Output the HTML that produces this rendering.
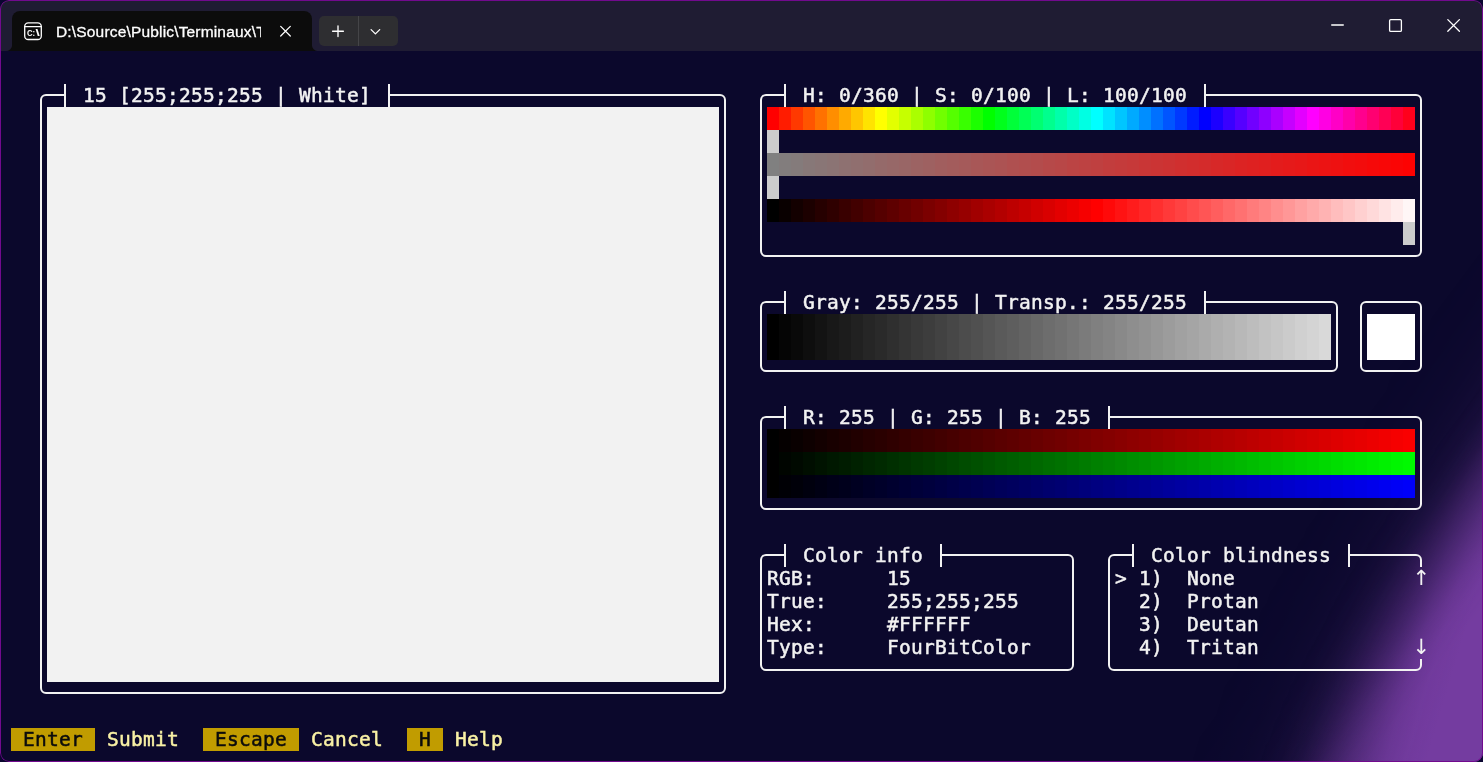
<!DOCTYPE html>
<html lang="en">
<head>
<meta charset="utf-8">
<title>D:\Source\Public\Terminaux</title>
<style>
html,body{margin:0;padding:0;background:#0a0530;}
body{width:1483px;height:762px;overflow:hidden;position:relative;font-family:"Liberation Sans",sans-serif;}
#win{position:absolute;left:0;top:0;width:1483px;height:762px;border-radius:9px;overflow:hidden;background:#0b082c;}
#frame{position:absolute;left:0;top:0;width:1481px;height:760px;border:1px solid #720a8e;border-radius:9px;}
#glow{position:absolute;left:0;top:0;width:1483px;height:762px;
 background:linear-gradient(106.7deg,rgba(116,60,160,0) 1423px,rgba(116,60,160,0.04) 1445px,rgba(116,60,160,0.14) 1464px,rgba(116,60,160,0.31) 1483px,rgba(116,60,160,0.5) 1504px,rgba(116,60,160,0.69) 1526px,rgba(116,60,160,0.86) 1545px,rgba(116,60,160,0.96) 1564px,rgba(116,60,160,1) 1585px);
 -webkit-mask-image:linear-gradient(126.9deg,rgba(0,0,0,0) 1416px,rgba(0,0,0,0.04) 1434px,rgba(0,0,0,0.14) 1450px,rgba(0,0,0,0.31) 1465px,rgba(0,0,0,0.5) 1483px,rgba(0,0,0,0.69) 1501px,rgba(0,0,0,0.86) 1517px,rgba(0,0,0,0.96) 1533px,rgba(0,0,0,1) 1551px);mask-image:linear-gradient(126.9deg,rgba(0,0,0,0) 1416px,rgba(0,0,0,0.04) 1434px,rgba(0,0,0,0.14) 1450px,rgba(0,0,0,0.31) 1465px,rgba(0,0,0,0.5) 1483px,rgba(0,0,0,0.69) 1501px,rgba(0,0,0,0.86) 1517px,rgba(0,0,0,0.96) 1533px,rgba(0,0,0,1) 1551px);}
#glow2{position:absolute;left:0;top:0;width:1483px;height:762px;
 background:linear-gradient(106.7deg,rgba(116,60,160,0) 1337px,rgba(116,60,160,0.016) 1375px,rgba(116,60,160,0.056) 1408px,rgba(116,60,160,0.124) 1441px,rgba(116,60,160,0.2) 1479px,rgba(116,60,160,0.276) 1517px,rgba(116,60,160,0.344) 1551px,rgba(116,60,160,0.384) 1584px,rgba(116,60,160,0.4) 1622px);
 -webkit-mask-image:linear-gradient(126.9deg,rgba(0,0,0,0) 1326px,rgba(0,0,0,0.04) 1364px,rgba(0,0,0,0.14) 1397px,rgba(0,0,0,0.31) 1430px,rgba(0,0,0,0.5) 1468px,rgba(0,0,0,0.69) 1506px,rgba(0,0,0,0.86) 1540px,rgba(0,0,0,0.96) 1573px,rgba(0,0,0,1) 1611px);mask-image:linear-gradient(126.9deg,rgba(0,0,0,0) 1326px,rgba(0,0,0,0.04) 1364px,rgba(0,0,0,0.14) 1397px,rgba(0,0,0,0.31) 1430px,rgba(0,0,0,0.5) 1468px,rgba(0,0,0,0.69) 1506px,rgba(0,0,0,0.86) 1540px,rgba(0,0,0,0.96) 1573px,rgba(0,0,0,1) 1611px);}
#titlebar{position:absolute;left:0;top:0;width:1483px;height:51px;background:#1f1c33;}
#tab{position:absolute;left:12px;top:11px;width:300px;height:40px;background:#0c0c0c;border-radius:8px 8px 0 0;}
#tab:before,#tab:after{content:"";position:absolute;bottom:0;width:6px;height:6px;}
#tab:before{left:-6px;background:radial-gradient(circle at 0 0,rgba(12,12,12,0) 5.5px,#0c0c0c 6.5px);}
#tab:after{right:-6px;background:radial-gradient(circle at 100% 0,rgba(12,12,12,0) 5.5px,#0c0c0c 6.5px);}
#tabtitle{position:absolute;left:56px;top:22px;width:205px;height:22px;overflow:hidden;white-space:nowrap;color:#fff;font-size:15.5px;line-height:20px;letter-spacing:0.17px;-webkit-text-stroke:0.3px #fff;will-change:transform;}
#newtab{position:absolute;left:319px;top:16px;width:79px;height:30px;background:#2e2e31;border-radius:5px;}
#newtab i{position:absolute;left:39px;top:0;width:1px;height:30px;background:#454548;}
.ico{position:absolute;left:0;top:0;width:1483px;height:762px;pointer-events:none;}
#term{will-change:transform;position:absolute;left:0;top:0;width:1483px;height:762px;font-family:"DejaVu Sans Mono","Liberation Mono",monospace;font-size:19.5px;line-height:23px;color:#f2f2f2;}
#term div{position:absolute;white-space:pre;}
.t,.key{height:23px;letter-spacing:0.26px;}
.t,.key{-webkit-text-stroke:0.5px currentColor;}
.ar{font-family:"DejaVu Sans","Liberation Sans",sans-serif;font-size:21px;line-height:23px;height:23px;}
.y{color:#f9f1a5;}
.key{background:#c19c00;color:#0c0c0c;text-align:center;}
</style>
</head>
<body>
<div id="win">
<div id="glow2"></div>
<div id="glow"></div>
<div id="titlebar"></div>
<div id="tab"></div>
<div id="tabtitle">D:\Source\Public\Terminaux\T</div>
<div id="newtab"><i></i></div>
<svg class="ico" viewBox="-1 -1 1483 762" fill="none" stroke="#fff" stroke-width="1.3" stroke-linecap="round" stroke-linejoin="round">
 <!-- terminal icon -->
 <rect x="23.7" y="21.8" width="16.6" height="16.7" rx="3.6"/>
 <path d="M23.7 25.7H40.3" stroke-width="1.2"/>
 <!-- tab close -->
 <path d="M279.7 25.4L289.3 35M289.3 25.4L279.7 35" stroke-width="1.25"/>
 <!-- plus -->
 <path d="M331.6 30.2H342.4M337 24.8V35.6" stroke-width="1.35"/>
 <!-- chevron -->
 <path d="M370.1 28.6L374.4 32.9L378.7 28.6" stroke-width="1.3"/>
 <!-- window controls -->
 <path d="M1330.7 24H1342.3" stroke-width="1.3"/>
 <rect x="1388.6" y="18.6" width="11.8" height="11.8" rx="1.2" stroke-width="1.3"/>
 <path d="M1446.8 18.6L1458.4 30.2M1458.4 18.6L1446.8 30.2" stroke-width="1.3"/>
</svg>
<svg class="ico" viewBox="0 0 1483 762"><text y="35.9" font-family="Liberation Sans,sans-serif" font-weight="bold" font-size="9.6" fill="#fff"><tspan x="27" textLength="8.2" lengthAdjust="spacingAndGlyphs">C:</tspan><tspan x="35.6" textLength="4.3" lengthAdjust="spacingAndGlyphs">\</tspan></text></svg>
<div id="term">
<div class="t" style="left:83px;top:84px;">15 [255;255;255 | White]</div>
<div class="bar" style="left:47px;top:107px;width:672px;height:575px;background:#f2f2f2"></div>
<div class="t" style="left:803px;top:84px;">H: 0/360 | S: 0/100 | L: 100/100</div>
<div class="bar" style="left:767px;top:107px;width:648px;height:23px;background:linear-gradient(90deg,#ff0000 0px 12px,#ff1c00 12px 24px,#ff3900 24px 36px,#ff5500 36px 48px,#ff7100 48px 60px,#ff8e00 60px 72px,#ffaa00 72px 84px,#ffc600 84px 96px,#ffe300 96px 108px,#ffff00 108px 120px,#e3ff00 120px 132px,#c6ff00 132px 144px,#aaff00 144px 156px,#8eff00 156px 168px,#71ff00 168px 180px,#55ff00 180px 192px,#39ff00 192px 204px,#1cff00 204px 216px,#00ff00 216px 228px,#00ff1c 228px 240px,#00ff39 240px 252px,#00ff55 252px 264px,#00ff71 264px 276px,#00ff8e 276px 288px,#00ffaa 288px 300px,#00ffc6 300px 312px,#00ffe3 312px 324px,#00ffff 324px 336px,#00e3ff 336px 348px,#00c6ff 348px 360px,#00aaff 360px 372px,#008eff 372px 384px,#0071ff 384px 396px,#0055ff 396px 408px,#0039ff 408px 420px,#001cff 420px 432px,#0000ff 432px 444px,#1c00ff 444px 456px,#3900ff 456px 468px,#5500ff 468px 480px,#7100ff 480px 492px,#8e00ff 492px 504px,#aa00ff 504px 516px,#c600ff 516px 528px,#e300ff 528px 540px,#ff00ff 540px 552px,#ff00e3 552px 564px,#ff00c6 564px 576px,#ff00aa 576px 588px,#ff008e 588px 600px,#ff0071 600px 612px,#ff0055 612px 624px,#ff0039 624px 636px,#ff001c 636px 648px)"></div>
<div class="bar" style="left:767px;top:153px;width:648px;height:23px;background:linear-gradient(90deg,#808080 0px 12px,#827d7d 12px 24px,#847b7b 24px 36px,#877878 36px 48px,#897676 48px 60px,#8b7474 60px 72px,#8e7171 72px 84px,#906f6f 84px 96px,#926d6d 96px 108px,#956a6a 108px 120px,#976868 120px 132px,#996666 132px 144px,#9c6363 144px 156px,#9e6161 156px 168px,#a15e5e 168px 180px,#a35c5c 180px 192px,#a55a5a 192px 204px,#a85757 204px 216px,#aa5555 216px 228px,#ac5353 228px 240px,#af5050 240px 252px,#b14e4e 252px 264px,#b34c4c 264px 276px,#b64949 276px 288px,#b84747 288px 300px,#bb4444 300px 312px,#bd4242 312px 324px,#bf4040 324px 336px,#c23d3d 336px 348px,#c43b3b 348px 360px,#c63939 360px 372px,#c93636 372px 384px,#cb3434 384px 396px,#cd3232 396px 408px,#d02f2f 408px 420px,#d22d2d 420px 432px,#d42b2b 432px 444px,#d72828 444px 456px,#d92626 456px 468px,#dc2323 468px 480px,#de2121 480px 492px,#e01f1f 492px 504px,#e31c1c 504px 516px,#e51a1a 516px 528px,#e71818 528px 540px,#ea1515 540px 552px,#ec1313 552px 564px,#ee1111 564px 576px,#f10e0e 576px 588px,#f30c0c 588px 600px,#f60909 600px 612px,#f80707 612px 624px,#fa0505 624px 636px,#fd0202 636px 648px)"></div>
<div class="bar" style="left:767px;top:199px;width:648px;height:23px;background:linear-gradient(90deg,#000000 0px 12px,#090000 12px 24px,#130000 24px 36px,#1c0000 36px 48px,#260000 48px 60px,#2f0000 60px 72px,#390000 72px 84px,#420000 84px 96px,#4c0000 96px 108px,#550000 108px 120px,#5e0000 120px 132px,#680000 132px 144px,#710000 144px 156px,#7b0000 156px 168px,#840000 168px 180px,#8e0000 180px 192px,#970000 192px 204px,#a10000 204px 216px,#aa0000 216px 228px,#b30000 228px 240px,#bd0000 240px 252px,#c60000 252px 264px,#d00000 264px 276px,#d90000 276px 288px,#e30000 288px 300px,#ec0000 300px 312px,#f60000 312px 324px,#ff0000 324px 336px,#ff0909 336px 348px,#ff1313 348px 360px,#ff1c1c 360px 372px,#ff2626 372px 384px,#ff2f2f 384px 396px,#ff3939 396px 408px,#ff4242 408px 420px,#ff4c4c 420px 432px,#ff5555 432px 444px,#ff5e5e 444px 456px,#ff6868 456px 468px,#ff7171 468px 480px,#ff7b7b 480px 492px,#ff8484 492px 504px,#ff8e8e 504px 516px,#ff9797 516px 528px,#ffa1a1 528px 540px,#ffaaaa 540px 552px,#ffb3b3 552px 564px,#ffbdbd 564px 576px,#ffc6c6 576px 588px,#ffd0d0 588px 600px,#ffd9d9 600px 612px,#ffe3e3 612px 624px,#ffecec 624px 636px,#fff6f6 636px 648px)"></div>
<div class="bar" style="left:767px;top:130px;width:12px;height:23px;background:#cccccc"></div>
<div class="bar" style="left:767px;top:176px;width:12px;height:23px;background:#cccccc"></div>
<div class="bar" style="left:1403px;top:222px;width:12px;height:23px;background:#cccccc"></div>
<div class="t" style="left:803px;top:291px;">Gray: 255/255 | Transp.: 255/255</div>
<div class="bar" style="left:767px;top:314px;width:564px;height:46px;background:linear-gradient(90deg,#000000 0px 12px,#050505 12px 24px,#090909 24px 36px,#0e0e0e 36px 48px,#131313 48px 60px,#181818 60px 72px,#1c1c1c 72px 84px,#212121 84px 96px,#262626 96px 108px,#2a2a2a 108px 120px,#2f2f2f 120px 132px,#343434 132px 144px,#393939 144px 156px,#3d3d3d 156px 168px,#424242 168px 180px,#474747 180px 192px,#4c4c4c 192px 204px,#505050 204px 216px,#555555 216px 228px,#5a5a5a 228px 240px,#5e5e5e 240px 252px,#636363 252px 264px,#686868 264px 276px,#6d6d6d 276px 288px,#717171 288px 300px,#767676 300px 312px,#7b7b7b 312px 324px,#808080 324px 336px,#848484 336px 348px,#898989 348px 360px,#8e8e8e 360px 372px,#929292 372px 384px,#979797 384px 396px,#9c9c9c 396px 408px,#a1a1a1 408px 420px,#a5a5a5 420px 432px,#aaaaaa 432px 444px,#afafaf 444px 456px,#b3b3b3 456px 468px,#b8b8b8 468px 480px,#bdbdbd 480px 492px,#c2c2c2 492px 504px,#c6c6c6 504px 516px,#cbcbcb 516px 528px,#d0d0d0 528px 540px,#d4d4d4 540px 552px,#d9d9d9 552px 564px)"></div>
<div class="bar" style="left:1367px;top:314px;width:48px;height:46px;background:#ffffff"></div>
<div class="t" style="left:803px;top:406px;">R: 255 | G: 255 | B: 255</div>
<div class="bar" style="left:767px;top:429px;width:648px;height:23px;background:linear-gradient(90deg,#000000 0px 12px,#050000 12px 24px,#090000 24px 36px,#0e0000 36px 48px,#130000 48px 60px,#180000 60px 72px,#1c0000 72px 84px,#210000 84px 96px,#260000 96px 108px,#2a0000 108px 120px,#2f0000 120px 132px,#340000 132px 144px,#390000 144px 156px,#3d0000 156px 168px,#420000 168px 180px,#470000 180px 192px,#4c0000 192px 204px,#500000 204px 216px,#550000 216px 228px,#5a0000 228px 240px,#5e0000 240px 252px,#630000 252px 264px,#680000 264px 276px,#6d0000 276px 288px,#710000 288px 300px,#760000 300px 312px,#7b0000 312px 324px,#800000 324px 336px,#840000 336px 348px,#890000 348px 360px,#8e0000 360px 372px,#920000 372px 384px,#970000 384px 396px,#9c0000 396px 408px,#a10000 408px 420px,#a50000 420px 432px,#aa0000 432px 444px,#af0000 444px 456px,#b30000 456px 468px,#b80000 468px 480px,#bd0000 480px 492px,#c20000 492px 504px,#c60000 504px 516px,#cb0000 516px 528px,#d00000 528px 540px,#d40000 540px 552px,#d90000 552px 564px,#de0000 564px 576px,#e30000 576px 588px,#e70000 588px 600px,#ec0000 600px 612px,#f10000 612px 624px,#f60000 624px 636px,#fa0000 636px 648px)"></div>
<div class="bar" style="left:767px;top:452px;width:648px;height:23px;background:linear-gradient(90deg,#000000 0px 12px,#000500 12px 24px,#000900 24px 36px,#000e00 36px 48px,#001300 48px 60px,#001800 60px 72px,#001c00 72px 84px,#002100 84px 96px,#002600 96px 108px,#002a00 108px 120px,#002f00 120px 132px,#003400 132px 144px,#003900 144px 156px,#003d00 156px 168px,#004200 168px 180px,#004700 180px 192px,#004c00 192px 204px,#005000 204px 216px,#005500 216px 228px,#005a00 228px 240px,#005e00 240px 252px,#006300 252px 264px,#006800 264px 276px,#006d00 276px 288px,#007100 288px 300px,#007600 300px 312px,#007b00 312px 324px,#008000 324px 336px,#008400 336px 348px,#008900 348px 360px,#008e00 360px 372px,#009200 372px 384px,#009700 384px 396px,#009c00 396px 408px,#00a100 408px 420px,#00a500 420px 432px,#00aa00 432px 444px,#00af00 444px 456px,#00b300 456px 468px,#00b800 468px 480px,#00bd00 480px 492px,#00c200 492px 504px,#00c600 504px 516px,#00cb00 516px 528px,#00d000 528px 540px,#00d400 540px 552px,#00d900 552px 564px,#00de00 564px 576px,#00e300 576px 588px,#00e700 588px 600px,#00ec00 600px 612px,#00f100 612px 624px,#00f600 624px 636px,#00fa00 636px 648px)"></div>
<div class="bar" style="left:767px;top:475px;width:648px;height:23px;background:linear-gradient(90deg,#000000 0px 12px,#000005 12px 24px,#000009 24px 36px,#00000e 36px 48px,#000013 48px 60px,#000018 60px 72px,#00001c 72px 84px,#000021 84px 96px,#000026 96px 108px,#00002a 108px 120px,#00002f 120px 132px,#000034 132px 144px,#000039 144px 156px,#00003d 156px 168px,#000042 168px 180px,#000047 180px 192px,#00004c 192px 204px,#000050 204px 216px,#000055 216px 228px,#00005a 228px 240px,#00005e 240px 252px,#000063 252px 264px,#000068 264px 276px,#00006d 276px 288px,#000071 288px 300px,#000076 300px 312px,#00007b 312px 324px,#000080 324px 336px,#000084 336px 348px,#000089 348px 360px,#00008e 360px 372px,#000092 372px 384px,#000097 384px 396px,#00009c 396px 408px,#0000a1 408px 420px,#0000a5 420px 432px,#0000aa 432px 444px,#0000af 444px 456px,#0000b3 456px 468px,#0000b8 468px 480px,#0000bd 480px 492px,#0000c2 492px 504px,#0000c6 504px 516px,#0000cb 516px 528px,#0000d0 528px 540px,#0000d4 540px 552px,#0000d9 552px 564px,#0000de 564px 576px,#0000e3 576px 588px,#0000e7 588px 600px,#0000ec 600px 612px,#0000f1 612px 624px,#0000f6 624px 636px,#0000fa 636px 648px)"></div>
<div class="t" style="left:803px;top:544px;">Color info</div>
<div class="t" style="left:767px;top:567px;">RGB:</div>
<div class="t" style="left:887px;top:567px;">15</div>
<div class="t" style="left:767px;top:590px;">True:</div>
<div class="t" style="left:887px;top:590px;">255;255;255</div>
<div class="t" style="left:767px;top:613px;">Hex:</div>
<div class="t" style="left:887px;top:613px;">#FFFFFF</div>
<div class="t" style="left:767px;top:636px;">Type:</div>
<div class="t" style="left:887px;top:636px;">FourBitColor</div>
<div class="t" style="left:1151px;top:544px;">Color blindness</div>
<div class="t" style="left:1115px;top:567px;">&gt;</div>
<div class="t" style="left:1139px;top:567px;">1)</div>
<div class="t" style="left:1187px;top:567px;">None</div>
<div class="t" style="left:1139px;top:590px;">2)</div>
<div class="t" style="left:1187px;top:590px;">Protan</div>
<div class="t" style="left:1139px;top:613px;">3)</div>
<div class="t" style="left:1187px;top:613px;">Deutan</div>
<div class="t" style="left:1139px;top:636px;">4)</div>
<div class="t" style="left:1187px;top:636px;">Tritan</div>
<div class="key" style="left:11px;top:728px;width:84px">Enter</div>
<div class="t y" style="left:107px;top:728px;">Submit</div>
<div class="key" style="left:203px;top:728px;width:96px">Escape</div>
<div class="t y" style="left:311px;top:728px;">Cancel</div>
<div class="key" style="left:407px;top:728px;width:36px">H</div>
<div class="t y" style="left:455px;top:728px;">Help</div>
<div class="ar" style="left:1412.5px;top:567px">↑</div>
<div class="ar" style="left:1412.5px;top:636px">↓</div>
</div>
<svg class="ico" viewBox="0 0 1483 762" fill="none" stroke="#f2f2f2" stroke-width="2">
<path d="M389,95 H720 A5,5 0 0 1 725,100 V688 A5,5 0 0 1 720,693 H46 A5,5 0 0 1 41,688 V100 A5,5 0 0 1 46,95 H65 M65,84 V107 M389,84 V107"/>
<path d="M1205,95 H1416 A5,5 0 0 1 1421,100 V251 A5,5 0 0 1 1416,256 H766 A5,5 0 0 1 761,251 V100 A5,5 0 0 1 766,95 H785 M785,84 V107 M1205,84 V107"/>
<path d="M1205,302 H1332 A5,5 0 0 1 1337,307 V366 A5,5 0 0 1 1332,371 H766 A5,5 0 0 1 761,366 V307 A5,5 0 0 1 766,302 H785 M785,291 V314 M1205,291 V314"/>
<path d="M1361,307 A5,5 0 0 1 1366,302 H1416 A5,5 0 0 1 1421,307 V366 A5,5 0 0 1 1416,371 H1366 A5,5 0 0 1 1361,366 Z"/>
<path d="M1109,417 H1416 A5,5 0 0 1 1421,422 V504 A5,5 0 0 1 1416,509 H766 A5,5 0 0 1 761,504 V422 A5,5 0 0 1 766,417 H785 M785,406 V429 M1109,406 V429"/>
<path d="M941,555 H1068 A5,5 0 0 1 1073,560 V665 A5,5 0 0 1 1068,670 H766 A5,5 0 0 1 761,665 V560 A5,5 0 0 1 766,555 H785 M785,544 V567 M941,544 V567"/>
<path d="M1349,555 H1416 A5,5 0 0 1 1421,560 V567 M1421,659 V665 A5,5 0 0 1 1416,670 H1114 A5,5 0 0 1 1109,665 V560 A5,5 0 0 1 1114,555 H1133 M1133,544 V567 M1349,544 V567"/>
</svg>
<div id="frame"></div>
</div>
</body>
</html>
